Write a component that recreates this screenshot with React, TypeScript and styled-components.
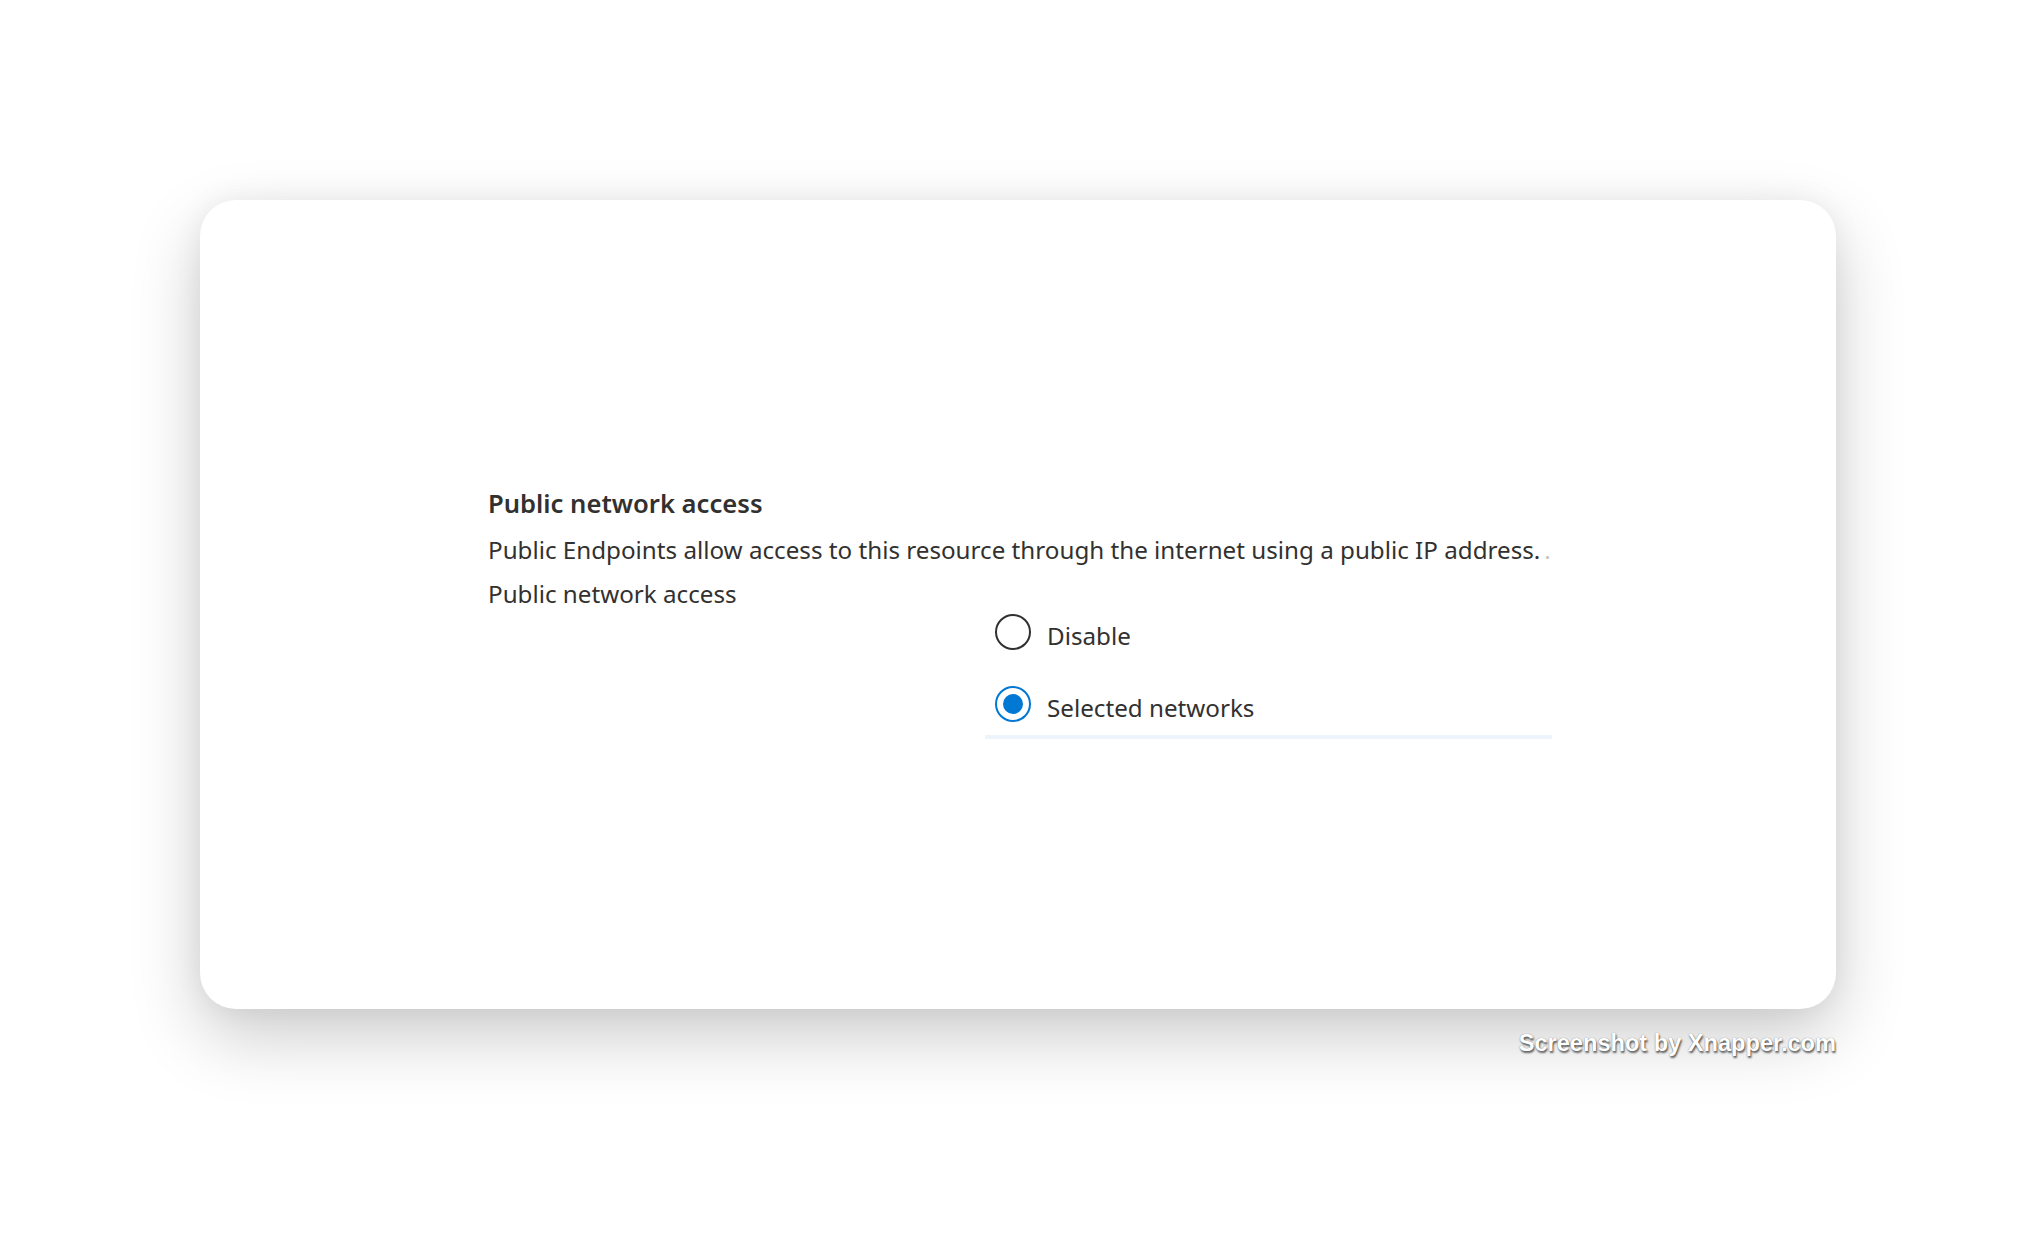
import styled, { createGlobalStyle } from "styled-components";
import { useState } from "react";

const GlobalStyle = createGlobalStyle`
  html, body {
    margin: 0;
    padding: 0;
    background: #ffffff;
  }
  body {
    font-family: "Noto Sans", "Open Sans", sans-serif;
  }
`;

const Page = styled.div`
  width: 2038px;
  height: 1260px;
  box-sizing: border-box;
  padding: 200px 202px 0 200px;
  display: flex;
  flex-direction: column;
  overflow: hidden;
`;

const Card = styled.div`
  height: 809px;
  box-sizing: border-box;
  background: #ffffff;
  border-radius: 36px;
  box-shadow: 0 28px 70px rgba(0, 0, 0, 0.2), 0 0 30px rgba(0, 0, 0, 0.06);
  padding: 287px 0 0 288px;
  color: #323130;
`;

const Title = styled.h2`
  margin: 0;
  font-size: 25.6px;
  font-weight: 600;
  line-height: 34px;
`;

const Description = styled.p`
  margin: 12px 0 0;
  font-size: 24.2px;
  line-height: 34px;
  white-space: nowrap;

  span {
    color: #c8c6c4;
    margin-left: 4px;
  }
`;

const FieldLabel = styled.div`
  margin-top: 10px;
  font-size: 24.2px;
  line-height: 34px;
`;

const RadioGroup = styled.div`
  margin: 8px 0 0 497px;
  width: 567px;
  display: flex;
  flex-direction: column;
  gap: 38px;
  padding: 0 0 10px 10px;
  box-sizing: border-box;
  border-bottom: 4px solid #eef4fb;
`;

const Option = styled.label`
  display: flex;
  align-items: flex-start;
  gap: 16px;
  font-size: 24.2px;
  line-height: 34px;
  cursor: pointer;
`;

const Dot = styled.span<{ $checked: boolean }>`
  width: 36px;
  height: 36px;
  margin-top: -5px;
  box-sizing: border-box;
  border-radius: 50%;
  border: 2px solid ${(p) => (p.$checked ? "#0078d4" : "#323130")};
  display: flex;
  align-items: center;
  justify-content: center;
  flex-shrink: 0;

  &::after {
    content: "";
    width: 20px;
    height: 20px;
    border-radius: 50%;
    background: #0078d4;
    display: ${(p) => (p.$checked ? "block" : "none")};
  }
`;

const Footer = styled.div`
  display: flex;
  justify-content: flex-end;
  margin-top: 21px;
`;

const Watermark = styled.span`
  font-family: "Liberation Sans", Arial, sans-serif;
  font-size: 23.6px;
  font-weight: 700;
  color: #ffffff;
  text-shadow: 1px 2px 2px rgba(0, 0, 0, 0.6), 0 0 1px rgba(0, 0, 0, 0.5);
`;

const options = ["Disable", "Selected networks"];

const App = () => {
  const [value, setValue] = useState("Selected networks");

  return (
    <>
      <GlobalStyle />
      <Page>
        <Card>
          <Title>Public network access</Title>
          <Description>
            Public Endpoints allow access to this resource through the internet
            using a public IP address.<span>.</span>
          </Description>
          <FieldLabel>Public network access</FieldLabel>
          <RadioGroup>
            {options.map((o) => (
              <Option key={o} onClick={() => setValue(o)}>
                <Dot $checked={value === o} />
                {o}
              </Option>
            ))}
          </RadioGroup>
        </Card>
        <Footer>
          <Watermark>Screenshot by Xnapper.com</Watermark>
        </Footer>
      </Page>
    </>
  );
};

export default App;
